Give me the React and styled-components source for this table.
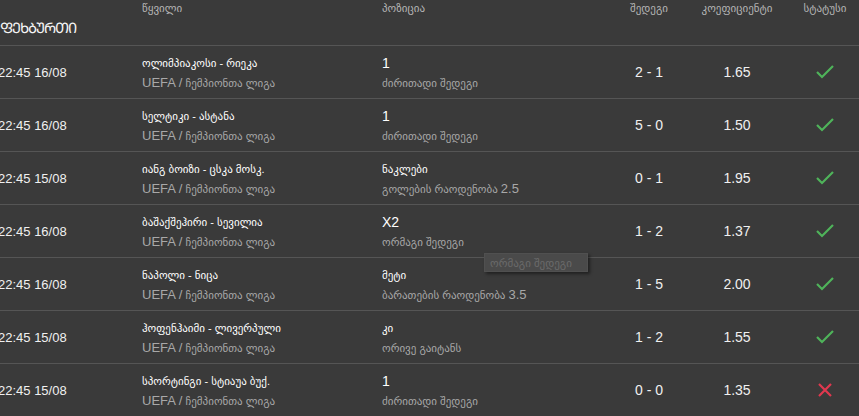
import React from "react";
import styled, { createGlobalStyle } from "styled-components";

const GlobalStyle = createGlobalStyle`
  html, body {
    margin: 0;
    padding: 0;
    background: #3a3a3a;
    overflow: hidden;
  }
  body {
    font-family: "Liberation Sans", "DejaVu Sans", sans-serif;
    color: #f2f2f2;
  }
`;

const COLS = "142px 240px 225px 84px 92px 84px";

const Page = styled.div`
  position: relative;
  width: 867px;
  height: 416px;
  background: #3a3a3a;
`;

const Header = styled.div`
  display: grid;
  grid-template-columns: ${COLS};
  grid-template-rows: 17px 28px;
  border-bottom: 1px solid #555;
`;

const Label = styled.div`
  font-size: 11px;
  line-height: 17px;
  color: #b5b5b5;
  text-align: ${(p) => (p.$center ? "center" : "left")};
`;

const Title = styled.div`
  grid-column: 1 / 3;
  font-size: 14.5px;
  letter-spacing: -1px;
  line-height: 22px;
  color: #f5f5f5;
`;

const Row = styled.div`
  display: grid;
  grid-template-columns: ${COLS};
  height: 52px;
  align-items: center;
  border-bottom: 1px solid #555;
`;

const Time = styled.div`
  font-size: 13px;
  margin-left: -2px;
  color: #f0f0f0;
`;

const Stack = styled.div`
  display: flex;
  flex-direction: column;
  padding-top: 1px;
`;

const Main = styled.div`
  font-size: ${(p) => (p.$latin ? "14px" : "11px")};
  line-height: 20px;
  color: #ffffff;
`;

const Sub = styled.div`
  font-size: 11px;
  line-height: 20px;
  color: #a8a8a8;
  span {
    font-size: 13px;
  }
`;

const Value = styled.div`
  font-size: 14px;
  text-align: center;
  color: #f0f0f0;
`;

const Status = styled.div`
  display: flex;
  justify-content: center;
  align-items: center;
`;

const Tooltip = styled.div`
  position: absolute;
  left: 484px;
  top: 253px;
  width: 104px;
  height: 19px;
  box-sizing: border-box;
  padding-left: 5px;
  font-size: 11px;
  line-height: 19px;
  color: #6a6a6a;
  background: #4a4a4a;
  border: 1px solid #505050;
  box-shadow: 2px 2px 3px rgba(0, 0, 0, 0.45);
`;

const Check = () => (
  <svg width="20" height="16" viewBox="0 0 20 16">
    <polyline points="2,8 7,13 18,2" fill="none" stroke="#4fb35a" strokeWidth="2.2" />
  </svg>
);

const Cross = () => (
  <svg width="16" height="16" viewBox="0 0 16 16">
    <path d="M2 2 L14 14 M14 2 L2 14" fill="none" stroke="#e0384f" strokeWidth="2.2" />
  </svg>
);

const rows = [
  { time: "22:45 16/08", match: "ოლიმპიაკოსი - რიეკა", pick: "1", desc: "ძირითადი შედეგი", score: "2 - 1", odd: "1.65", won: true },
  { time: "22:45 16/08", match: "სელტიკი - ასტანა", pick: "1", desc: "ძირითადი შედეგი", score: "5 - 0", odd: "1.50", won: true },
  { time: "22:45 15/08", match: "იანგ ბოიზი - ცსკა მოსკ.", pick: "ნაკლები", desc: "გოლების რაოდენობა 2.5", score: "0 - 1", odd: "1.95", won: true },
  { time: "22:45 16/08", match: "ბაშაქშეჰირი - სევილია", pick: "X2", desc: "ორმაგი შედეგი", score: "1 - 2", odd: "1.37", won: true },
  { time: "22:45 16/08", match: "ნაპოლი - ნიცა", pick: "მეტი", desc: "ბარათების რაოდენობა 3.5", score: "1 - 5", odd: "2.00", won: true },
  { time: "22:45 15/08", match: "ჰოფენჰაიმი - ლივერპული", pick: "კი", desc: "ორივე გაიტანს", score: "1 - 2", odd: "1.55", won: true },
  { time: "22:45 15/08", match: "სპორტინგი - სტიაუა ბუქ.", pick: "1", desc: "ძირითადი შედეგი", score: "0 - 0", odd: "1.35", won: false },
];

const isLatin = (s) => /^[\x00-\x7F]+$/.test(s);

const withNums = (s) =>
  s.split(/(\d+(?:\.\d+)?)/).map((part, i) =>
    /\d/.test(part) ? <span key={i}>{part}</span> : part
  );

export default function App() {
  return (
    <Page>
      <GlobalStyle />
      <Header>
        <div />
        <Label>წყვილი</Label>
        <Label>პოზიცია</Label>
        <Label $center>შედეგი</Label>
        <Label $center>კოეფიციენტი</Label>
        <Label $center>სტატუსი</Label>
        <Title>ᲤᲔᲮᲑᲣᲠᲗᲘ</Title>
      </Header>
      {rows.map((r, i) => (
        <Row key={i}>
          <Time>{r.time}</Time>
          <Stack>
            <Main>{r.match}</Main>
            <Sub>
              <span>UEFA /</span> ჩემპიონთა ლიგა
            </Sub>
          </Stack>
          <Stack>
            <Main $latin={isLatin(r.pick)}>{r.pick}</Main>
            <Sub>{withNums(r.desc)}</Sub>
          </Stack>
          <Value>{r.score}</Value>
          <Value>{r.odd}</Value>
          <Status>{r.won ? <Check /> : <Cross />}</Status>
        </Row>
      ))}
      <Tooltip>ორმაგი შედეგი</Tooltip>
    </Page>
  );
}
